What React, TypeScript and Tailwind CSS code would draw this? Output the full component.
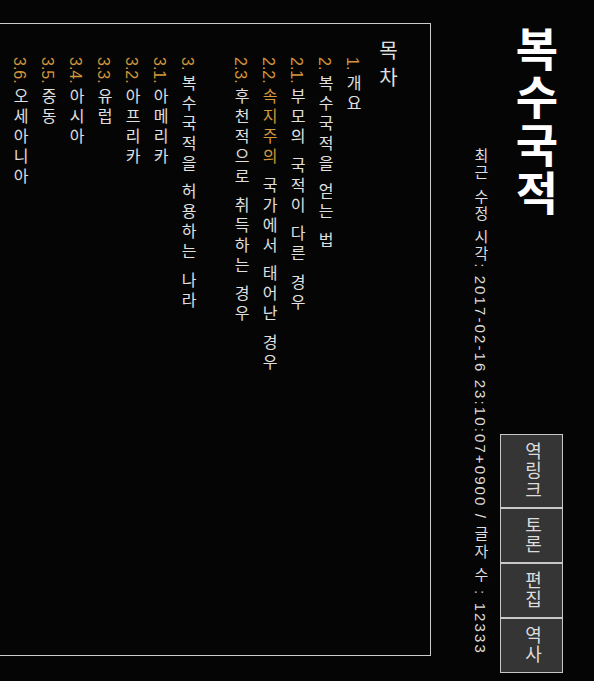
type TocItem = { n: string; t: string; hl?: string; children?: TocItem[] };

const toc: TocItem[] = [
  { n: "1.", t: "개요" },
  {
    n: "2.",
    t: "복수국적을 얻는 법",
    children: [
      { n: "2.1.", t: "부모의 국적이 다른 경우" },
      { n: "2.2.", t: "국가에서 태어난 경우", hl: "속지주의" },
      { n: "2.3.", t: "후천적으로 취득하는 경우" },
    ],
  },
  {
    n: "3.",
    t: "복수국적을 허용하는 나라",
    children: [
      { n: "3.1.", t: "아메리카" },
      { n: "3.2.", t: "아프리카" },
      { n: "3.3.", t: "유럽" },
      { n: "3.4.", t: "아시아" },
      { n: "3.5.", t: "중동" },
      { n: "3.6.", t: "오세아니아" },
    ],
  },
];

const TocLine = ({ item }: { item: TocItem }) => (
  <li className="leading-[28px] whitespace-nowrap">
    <span className="text-[#d4973b]">{item.n}</span>{" "}
    {item.hl && <span className="text-[#d4973b] tracking-[4px]">{item.hl} </span>}
    <span className="tracking-[4px]">{item.t}</span>
  </li>
);

const buttons = ["역링크", "토론", "편집", "역사"];

export default function App() {
  return (
    <div className="flex flex-row-reverse h-[681px] w-[594px] overflow-hidden bg-[#050505] pr-[31px] pt-[22px] pb-[8px] text-[#e0e0e0] font-['Liberation_Sans','Noto_Sans_CJK_KR',sans-serif]">
      {/* title + action buttons */}
      <div className="flex flex-col justify-between items-end w-[63px] shrink-0">
        <h1 className="[writing-mode:vertical-rl] text-[46px] leading-[55px] tracking-[2px] font-bold text-white mr-[3px] mt-[4px]">
          복수국적
        </h1>
        <div className="flex flex-col w-[63px] border border-[#c8c8c8] bg-[#353535]">
          {buttons.map((b, i) => (
            <button
              key={b}
              className={
                "flex justify-center w-full py-[7px] text-[18px] text-[#dcdcdc] " +
                (i > 0 ? "border-t-2 border-[#c8c8c8]" : "")
              }
            >
              <span className="[writing-mode:vertical-rl] leading-[22px] tracking-[1.5px]">{b}</span>
            </button>
          ))}
        </div>
      </div>

      {/* last edit info */}
      <div className="[writing-mode:vertical-rl] self-end mb-[18px] mr-[10px] shrink-0 text-[15px] leading-[20px] tracking-[2.1px] whitespace-nowrap text-[#ddd]">
        최근 수정 시각: 2017-02-16 23:10:07+0900 / 글자 수 : 12333
      </div>

      {/* table of contents */}
      <div className="[writing-mode:vertical-rl] self-start mt-[1px] mr-[39px] shrink-0 h-[633px] border border-[#ccc] pr-[28px] pt-[16px] pl-[20px]">
        <div className="text-[20px] leading-[30px] tracking-[7px] ml-[6px]">목차</div>
        <ul className="pt-[17px] text-[16px]">
          {toc.map((item) => (
            <li key={item.n} className={item.n === "2." ? "ml-[25px]" : ""}>
              <ul>
                <TocLine item={item} />
                {item.children?.map((c) => <TocLine key={c.n} item={c} />)}
              </ul>
            </li>
          ))}
        </ul>
      </div>
    </div>
  );
}
